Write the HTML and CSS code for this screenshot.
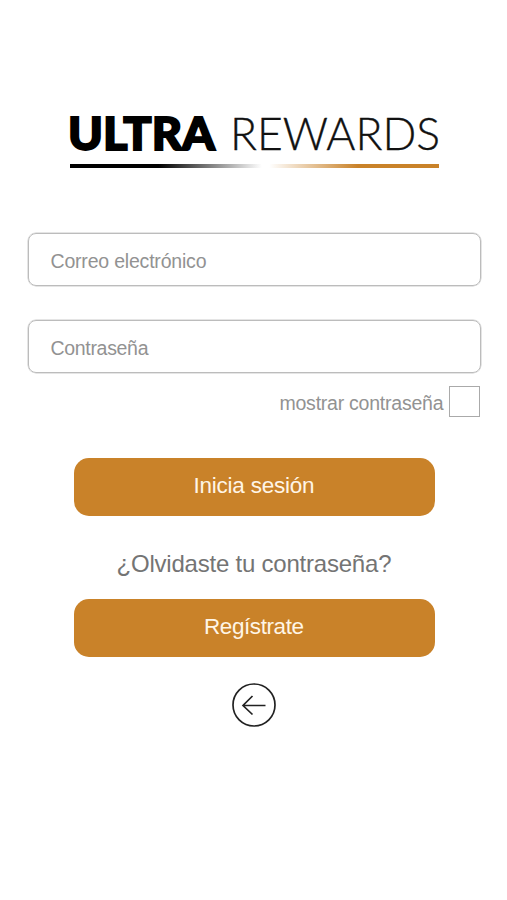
FILE: index.html
```
<!DOCTYPE html>
<html lang="es">
<head>
<meta charset="utf-8">
<title>Ultra Rewards</title>
<link rel="stylesheet" href="styles.css">
</head>
<body>
<main class="page">
  <h1 class="logo">
    <svg class="wordmark" viewBox="0 0 372 40" role="img">
      <text class="bold" x="0" y="35.5" textLength="147" lengthAdjust="spacingAndGlyphs">ULTRA</text>
      <text class="thin" x="162" y="35.5" textLength="210" lengthAdjust="spacingAndGlyphs">REWARDS</text>
    </svg>
    <span class="rule"></span>
  </h1>
  <form class="form">
    <div class="field"><svg class="label" width="157" height="28"><text x="-0.5" y="21.5" textLength="156">Correo electrónico</text></svg></div>
    <div class="field"><svg class="label" width="100" height="28"><text x="-0.5" y="21.5" textLength="98">Contraseña</text></svg></div>
    <div class="show"><svg class="label" width="165" height="28"><text x="0.5" y="22.5" textLength="164">mostrar contraseña</text></svg><span class="box"></span></div>
    <div class="button"><svg width="122" height="32"><text x="0.5" y="23" textLength="121">Inicia sesión</text></svg></div>
    <div class="forgot"><svg width="276" height="32"><text x="0.5" y="24" textLength="275">¿Olvidaste tu contraseña?</text></svg></div>
    <div class="button"><svg width="101" height="32"><text x="0" y="23" textLength="100">Regístrate</text></svg></div>
  </form>
  <a class="back"><svg width="46" height="46" viewBox="0 0 46 46"><circle cx="23" cy="23" r="21"/><path d="M34.5 23.5H12M21.5 14L12 23.5L21.5 32.5"/></svg></a>
</main>
</body>
</html>
```
FILE: styles.css
```
* { box-sizing: border-box; }
body { margin: 0; background: #fff; font-family: "Liberation Sans", Arial, sans-serif; }
svg { display: block; overflow: visible; }
.page { width: 507px; height: 900px; padding: 114px 0 0 1px; display: flex; flex-direction: column; align-items: center; }
.logo { margin: 0; width: 372px; }
.wordmark { width: 372px; height: 40px; }
.bold { font: 900 45px Lato, sans-serif; fill: #000; stroke: #000; stroke-width: 1.8; }
.thin { font: 300 46px Lato, sans-serif; fill: #111; stroke: #111; stroke-width: .35; }
.rule { display: block; height: 4px; margin: 10px 1px 0 2px; background: linear-gradient(90deg, #000 0 24%, #fff 52% 54%, #c98229 78%); }
.form { width: 453px; margin-top: 65px; display: flex; flex-direction: column; align-items: center; }
.field { width: 453px; height: 53px; margin-bottom: 34px; padding-left: 22px; border: 1.5px solid #bcbcbc; border-radius: 8px; box-shadow: 0 0 0 .5px #ccc; display: flex; align-items: center; }
.label { font-size: 19.5px; fill: #929292; }
.show { align-self: flex-end; margin-top: -22px; height: 32px; display: flex; align-items: center; gap: 5px; padding-right: 1px; }
.box { width: 31px; height: 31px; border: 1.5px solid #aaa; }
.button { width: 361px; height: 58px; border-radius: 15px; background: #c98229; display: flex; justify-content: center; padding-top: 12px; font-size: 22.5px; fill: #fff5e6; }
.show + .button { margin-top: 41px; }
.forgot { height: 83px; padding-top: 32px; font-size: 24px; fill: #747474; }
.back { margin-top: 25px; }
.back svg { fill: none; stroke: #222; stroke-width: 1.7; }
```
